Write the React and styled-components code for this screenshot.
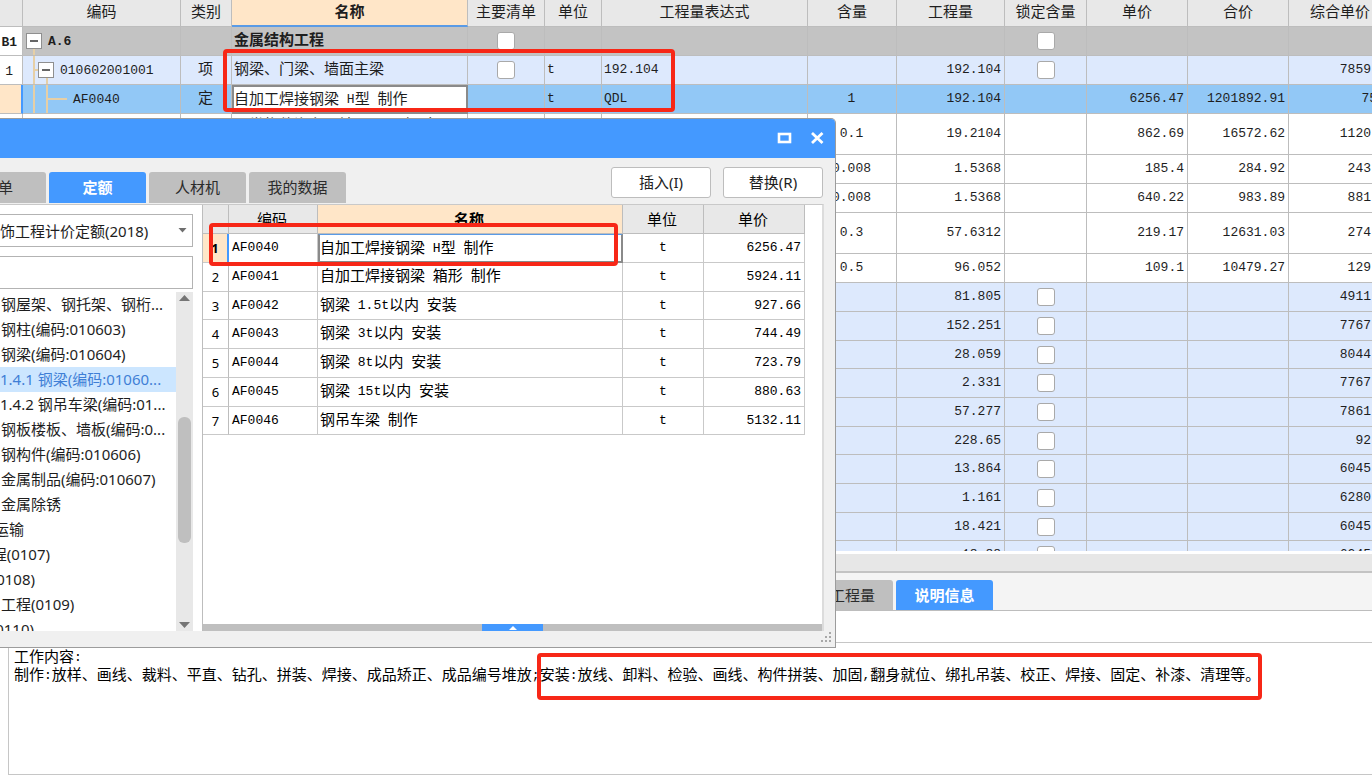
import React from "react";
import styled, { createGlobalStyle, css } from "styled-components";

const GlobalStyle = createGlobalStyle`
  * {
    box-sizing: border-box;
  }
  body {
    margin: 0;
    overflow: hidden;
    background: #ffffff;
  }
`;

const gridFont = `"Liberation Mono", "Noto Sans CJK SC", monospace`;
const cjkFont = `"Noto Sans CJK SC", sans-serif`;
const uiFont = `"Noto Sans", "Noto Sans CJK SC", sans-serif`;

const Page = styled.div`
  position: relative;
  height: 100vh;
  display: flex;
  flex-direction: column;
  overflow: hidden;
  font-family: ${cjkFont};
  font-size: 15px;
  color: #1e1e1e;
`;

const Latin = styled.span`
  font-family: ${gridFont};
  font-size: 13px;
  line-height: 1;
  vertical-align: 1px;
  white-space: pre;
`;

const CheckBox = styled.input`
  appearance: none;
  display: block;
  width: 18px;
  height: 18px;
  margin: 0 auto;
  border: 1px solid #a9a9a9;
  border-radius: 3px;
  background: #ffffff;
`;

/* ---------- bill grid ---------- */

const GridArea = styled.div`
  height: 551px;
  flex: none;
  overflow: hidden;
`;

const Grid = styled.table`
  width: calc(100% + 20px);
  table-layout: fixed;
  border-collapse: separate;
  border-spacing: 0;
`;

const Col = styled.col`
  width: ${(props) => (props.$w ? `${props.$w}px` : "auto")};
`;

const HeadCell = styled.th`
  height: 27px;
  padding: 0 0 4px;
  background: ${(props) => (props.$current ? "#ffe6c8" : "#e8e8e8")};
  border-right: 1px solid #bdbdbd;
  border-bottom: ${(props) =>
    props.$current ? "2px solid #5a9be6" : "1px solid #bdbdbd"};
  font-weight: ${(props) => (props.$current ? 700 : 400)};
  line-height: 20px;
  white-space: nowrap;
`;

const rowTones = {
  group: "#c3c3c3",
  item: "#dde9fd",
  active: "#92c8f6",
  plain: "#ffffff",
};

const Row = styled.tr`
  height: ${(props) => (props.$tall ? 41 : 29)}px;
  background: ${(props) => rowTones[props.$tone]};
  font-weight: ${(props) => (props.$tone === "group" ? 700 : 400)};
  &:nth-child(3),
  &:nth-child(3n + 11) {
    height: 28px;
  }
`;

const Cell = styled.td`
  padding: 0 3px 4px 2px;
  border-right: 1px solid #bdbdbd;
  border-bottom: 1px solid #bdbdbd;
  text-align: ${(props) => props.$align || "left"};
  line-height: 20px;
  white-space: nowrap;
  overflow: hidden;
`;

const CheckCell = styled(Cell)`
  padding: 0;
`;

const LastCell = styled(Cell)`
  padding-right: ${(props) => (props.$cut ? 14 : 20)}px;
`;

const IndexCell = styled(Cell)`
  padding: 0 9px 1px 0;
  background: ${(props) => (props.$current ? "#ffe6c8" : "#ffffff")};
  text-align: right;
  ${(props) =>
    props.$bold &&
    css`
      padding-right: 5px;
    `}
  ${(props) =>
    props.$current &&
    css`
      border-right: 2px solid #4499ff;
    `}
`;

const NameCell = styled(Cell)`
  ${(props) =>
    props.$editing &&
    css`
      background: #ffffff;
      border: 2px solid #8a8a8a;
      padding: 0 0 4px;
    `}
  ${(props) =>
    props.$top &&
    css`
      vertical-align: top;
    `}
`;

const TreeCell = styled(Cell)`
  padding: 0;
`;

const TreeInner = styled.div`
  display: flex;
  align-items: center;
  gap: 6px;
  height: 28px;
`;

const Guides = styled.svg`
  flex: none;
  display: block;
`;

const TreeGuides = ({ level }) => {
  const width = [19, 31, 44][level];
  const boxX = [3, 15][level];
  return (
    <Guides width={width} height="29" viewBox={`0 0 ${width} 29`}>
      <g stroke="#e6cfa6" strokeWidth="2" fill="none">
        {level === 0 && <path d="M11 22V29" />}
        {level === 1 && <path d="M11 0V29M11 14H15M24 22V29" />}
        {level === 2 && <path d="M11 0V29M24 0V29M24 14H44" />}
      </g>
      {boxX && (
        <g>
          <rect
            x={boxX + 0.5}
            y="6.5"
            width="15"
            height="15"
            fill="#fff"
            stroke="#8f8f8f"
          />
          <path
            d={`M${boxX + 4} 14H${boxX + 12}`}
            stroke="#333"
            strokeWidth="1.5"
          />
        </g>
      )}
    </Guides>
  );
};

/* ---------- lower panel ---------- */

const ScrollTrack = styled.div`
  flex: none;
  height: 19px;
  margin-top: 3px;
  background: #e7e7e7;
  border-bottom: 2px solid #c3c3c3;
`;

const DetailTabs = styled.div`
  flex: none;
  display: flex;
  align-items: flex-end;
  gap: 3px;
  height: 38px;
  padding-left: 796px;
  background: #f4f4f4;
  border-bottom: 1px solid #bdbdbd;
`;

const Tab = styled.button`
  flex: none;
  width: 97px;
  height: 31px;
  padding: 0 0 2px;
  border: none;
  border-radius: 3px 3px 0 0;
  background: ${(props) => (props.$active ? "#4499ff" : "#bfbfbf")};
  color: ${(props) => (props.$active ? "#ffffff" : "#2b2b2b")};
  font-family: ${uiFont};
  font-size: 15px;
  font-weight: ${(props) => (props.$active ? 700 : 400)};
  white-space: nowrap;
`;

const DetailTab = styled(Tab)`
  height: 30px;
  padding-right: ${(props) => (props.$active ? 0 : 18)}px;
  text-align: ${(props) => (props.$active ? "center" : "right")};
`;

const DetailBody = styled.div`
  flex: 1;
  display: flex;
  padding: 31px 0 5px 8px;
`;

const DetailText = styled.div`
  flex: 1;
  padding: 4px 5px;
  border: 1px solid #c6c6c6;
  border-right: none;
  color: #000000;
  line-height: 18px;
  white-space: nowrap;
`;

const Line = styled.p`
  margin: 0;
`;

/* ---------- quota dialog ---------- */

const Dialog = styled.section`
  position: absolute;
  top: 118px;
  left: 0;
  width: 836px;
  height: 530px;
  display: flex;
  flex-direction: column;
  background: #f0f0f0;
  border: 1px solid #9c9c9c;
  border-left: none;
  border-radius: 0 5px 0 0;
  overflow: hidden;
`;

const TitleBar = styled.header`
  flex: none;
  display: flex;
  justify-content: flex-end;
  align-items: center;
  gap: 16px;
  height: 39px;
  padding: 0 10px 2px 0;
  background: #4499ff;
`;

const TitleButton = styled.button`
  display: flex;
  padding: 0;
  border: none;
  background: none;
`;

const ToolRow = styled.div`
  flex: none;
  display: flex;
  align-items: flex-end;
  justify-content: space-between;
  height: 46px;
  padding: 0 12px 1px 0;
`;

const TabGroup = styled.div`
  display: flex;
  gap: 3px;
`;

const CutTab = styled(Tab)`
  display: flex;
  align-items: center;
  justify-content: flex-end;
  width: 46px;
  padding-right: 33px;
  border-radius: 0 3px 0 0;
  overflow: hidden;
`;

const Actions = styled.div`
  display: flex;
  gap: 12px;
  padding-bottom: 5px;
`;

const ActionButton = styled.button`
  width: 100px;
  height: 31px;
  padding: 0 0 2px;
  background: #ffffff;
  border: 1px solid #bdbdbd;
  border-radius: 3px;
  color: #1e1e1e;
  font-family: ${uiFont};
  font-size: 15px;
`;

const DialogBody = styled.div`
  flex: 1;
  display: flex;
  min-height: 0;
  margin-right: 11px;
  border-top: 1px solid #c9c9c9;
  border-right: 2px solid #dcdcdc;
  background: #ffffff;
`;

const SidePanel = styled.div`
  flex: none;
  display: flex;
  flex-direction: column;
  width: 202px;
  padding: 9px 9px 0 0;
  font-family: ${uiFont};
`;

const SelectWrap = styled.div`
  position: relative;
  flex: none;
  height: 33px;
  margin-bottom: 9px;
`;

const LibrarySelect = styled.select`
  appearance: none;
  width: 100%;
  height: 33px;
  padding: 0;
  border: 1px solid #b3b3b3;
  border-left: none;
  border-radius: 0;
  background: #ffffff;
  color: #1e1e1e;
  font-family: ${uiFont};
  font-size: 15px;
`;

const SelectArrow = styled.svg`
  position: absolute;
  top: 14px;
  right: 6px;
  pointer-events: none;
`;

const SearchInput = styled.input`
  flex: none;
  width: 100%;
  height: 33px;
  margin-bottom: 3px;
  border: 1px solid #b3b3b3;
  border-left: none;
  font-size: 15px;
`;

const ChapterArea = styled.div`
  flex: 1;
  display: flex;
  min-height: 0;
`;

const ChapterList = styled.ul`
  flex: 1;
  min-width: 0;
  margin: 0;
  padding: 0;
  list-style: none;
  overflow: hidden;
`;

const Chapter = styled.li`
  height: 25px;
  line-height: 25px;
  padding-left: ${(props) => (props.$sub ? 0 : 1)}px;
  background: ${(props) => (props.$active ? "#cce6ff" : "transparent")};
  color: ${(props) => (props.$active ? "#3f7fd6" : "#1e1e1e")};
  white-space: nowrap;
  overflow: hidden;
`;

/* names that start left of the dialog's visible part */
const CutName = styled.span`
  display: flex;
  justify-content: flex-end;
  width: ${(props) => props.$w}px;
`;

const ScrollBar = styled.div`
  flex: none;
  display: flex;
  flex-direction: column;
  align-items: center;
  width: 17px;
  padding: 3px 0;
  background: #e8e8e8;
`;

const Thumb = styled.div`
  width: 13px;
  height: 126px;
  margin: 116px 0 auto;
  border-radius: 6px;
  background: #bfbfbf;
`;

const ResultPanel = styled.div`
  flex: 1;
  display: flex;
  flex-direction: column;
  min-width: 0;
  border-left: 1px solid #bdbdbd;
`;

const ResultTable = styled.table`
  width: 602px;
  table-layout: fixed;
  border-collapse: separate;
  border-spacing: 0;
  color: #000000;
`;

const ResultHead = styled(HeadCell)`
  height: 29px;
  padding: 0 2px 1px 0;
  border-bottom: 1px solid #bdbdbd;
`;

const ResultRow = styled.tr`
  height: 29px;
  &:nth-child(4n + 3) {
    height: 28px;
  }
`;

const ResultCell = styled(Cell)`
  border-color: #c9c9c9;
  padding-left: 3px;
`;

const ResultIndex = styled(ResultCell)`
  padding: 0;
  background: ${(props) => (props.$current ? "#ffe6c8" : "#ffffff")};
  border-right: ${(props) =>
    props.$current ? "2px solid #4499ff" : "1px solid #bdbdbd"};
  font-family: ${uiFont};
  font-size: 13px;
  font-weight: ${(props) => (props.$current ? 700 : 400)};
  text-align: center;
`;

const ResultName = styled(ResultCell)`
  padding-left: 2px;
  ${(props) =>
    props.$editing &&
    css`
      border: 2px solid #8a8a8a;
      border-top: 1px solid #5a9be6;
      padding: 0 0 3px;
    `}
`;

const Splitter = styled.div`
  flex: none;
  display: flex;
  justify-content: center;
  height: 7px;
  margin-top: auto;
  background: #bfbfbf;
`;

const SplitterHandle = styled.button`
  display: flex;
  align-items: center;
  justify-content: center;
  width: 61px;
  height: 7px;
  padding: 0;
  border: none;
  background: #4499ff;
`;

const DialogFooter = styled.footer`
  flex: none;
  display: flex;
  justify-content: flex-end;
  height: 16px;
  padding: 1px 3px 0 0;
`;

/* ---------- highlight frames ---------- */

const Mark = styled.div`
  position: absolute;
  top: ${(props) => props.$top}px;
  left: ${(props) => props.$left}px;
  width: ${(props) => props.$w}px;
  height: ${(props) => props.$h}px;
  border: 4px solid #f72717;
  border-radius: 4px;
  pointer-events: none;
`;

// The grid sets western letters and digits smaller than the Chinese text
const Text = ({ children }) =>
  String(children)
    .split(/([\x20-\x7e]+)/)
    .filter(Boolean)
    .map((part, i) =>
      /^[\x20-\x7e]/.test(part) ? (
        <Latin key={i}>{part}</Latin>
      ) : (
        <React.Fragment key={i}>{part}</React.Fragment>
      )
    );

const columns = [
  { title: "", w: 23 },
  { title: "编码", w: 158 },
  { title: "类别", w: 51 },
  { title: "名称", w: 236, current: true },
  { title: "主要清单", w: 77 },
  { title: "单位", w: 57 },
  { title: "工程量表达式" },
  { title: "含量", w: 89 },
  { title: "工程量", w: 108 },
  { title: "锁定含量", w: 82 },
  { title: "单价", w: 101 },
  { title: "合价", w: 101 },
  { title: "综合单价", w: 103 },
];

const rows = [
  { no: "B1", tone: "group", level: 0, code: "A.6", name: "金属结构工程", main: true, lock: true },
  { no: "1", tone: "item", level: 1, code: "010602001001", kind: "项", name: "钢梁、门梁、墙面主梁", main: true, unit: "t", expr: "192.104", qty: "192.104", lock: true, full: "7859" },
  { no: "", tone: "active", level: 2, code: "AF0040", kind: "定", name: "自加工焊接钢梁 H型 制作", unit: "t", expr: "QDL", rate: "1", qty: "192.104", price: "6256.47", total: "1201892.91", full: "75", cut: true },
  { tone: "plain", tall: true, level: 2, name: "Ⅱ类构件汽车运输 1km以内 实际", rate: "0.1", qty: "19.2104", price: "862.69", total: "16572.62", full: "1120" },
  { tone: "plain", rate: "0.008", qty: "1.5368", price: "185.4", total: "284.92", full: "243" },
  { tone: "plain", rate: "0.008", qty: "1.5368", price: "640.22", total: "983.89", full: "881" },
  { tone: "plain", tall: true, rate: "0.3", qty: "57.6312", price: "219.17", total: "12631.03", full: "274" },
  { tone: "plain", rate: "0.5", qty: "96.052", price: "109.1", total: "10479.27", full: "129" },
  { tone: "item", qty: "81.805", lock: true, full: "4911" },
  { tone: "item", qty: "152.251", lock: true, full: "7767" },
  { tone: "item", qty: "28.059", lock: true, full: "8044" },
  { tone: "item", qty: "2.331", lock: true, full: "7767" },
  { tone: "item", qty: "57.277", lock: true, full: "7861" },
  { tone: "item", qty: "228.65", lock: true, full: "92" },
  { tone: "item", qty: "13.864", lock: true, full: "6045" },
  { tone: "item", qty: "1.161", lock: true, full: "6280" },
  { tone: "item", qty: "18.421", lock: true, full: "6045" },
  { tone: "item", qty: "18.88", lock: true, full: "6245" },
];

const chapters = [
  { name: "钢屋架、钢托架、钢桁..." },
  { name: "钢柱(编码:010603)" },
  { name: "钢梁(编码:010604)" },
  { name: "1.4.1 钢梁(编码:01060...", sub: true, active: true },
  { name: "1.4.2 钢吊车梁(编码:01...", sub: true },
  { name: "钢板楼板、墙板(编码:0..." },
  { name: "钢构件(编码:010606)" },
  { name: "金属制品(编码:010607)" },
  { name: "金属除锈" },
  { name: "运输", cut: 23 },
  { name: "程(0107)", cut: 49 },
  { name: "(0108)", cut: 34 },
  { name: "工程(0109)" },
  { name: "(0110)", cut: 33 },
];

const quotas = [
  { code: "AF0040", name: "自加工焊接钢梁 H型 制作", price: "6256.47" },
  { code: "AF0041", name: "自加工焊接钢梁 箱形 制作", price: "5924.11" },
  { code: "AF0042", name: "钢梁 1.5t以内 安装", price: "927.66" },
  { code: "AF0043", name: "钢梁 3t以内 安装", price: "744.49" },
  { code: "AF0044", name: "钢梁 8t以内 安装", price: "723.79" },
  { code: "AF0045", name: "钢梁 15t以内 安装", price: "880.63" },
  { code: "AF0046", name: "钢吊车梁 制作", price: "5132.11" },
];

const BillGrid = () => (
  <GridArea>
    <Grid>
      <colgroup>
        {columns.map((col, i) => (
          <Col key={i} $w={col.w} />
        ))}
      </colgroup>
      <thead>
        <tr>
          {columns.map((col, i) => (
            <HeadCell key={i} $current={col.current}>
              {col.title}
            </HeadCell>
          ))}
        </tr>
      </thead>
      <tbody>
        {rows.map((row, i) => (
          <Row key={i} $tone={row.tone} $tall={row.tall}>
            <IndexCell $current={row.no === ""} $bold={row.tone === "group"}>
              <Text>{row.no || ""}</Text>
            </IndexCell>
            <TreeCell>
              {row.level !== undefined && (
                <TreeInner>
                  <TreeGuides level={row.level} />
                  <Text>{row.code || ""}</Text>
                </TreeInner>
              )}
            </TreeCell>
            <Cell $align="center">{row.kind}</Cell>
            <NameCell $editing={row.tone === "active"} $top={row.tall}>
              <Text>{row.name || ""}</Text>
            </NameCell>
            <CheckCell>
              {row.main && <CheckBox type="checkbox" aria-label="主要清单" />}
            </CheckCell>
            <Cell>
              <Text>{row.unit || ""}</Text>
            </Cell>
            <Cell>
              <Text>{row.expr || ""}</Text>
            </Cell>
            <Cell $align="center">
              <Text>{row.rate || ""}</Text>
            </Cell>
            <Cell $align="right">
              <Text>{row.qty || ""}</Text>
            </Cell>
            <CheckCell>
              {row.lock && <CheckBox type="checkbox" aria-label="锁定含量" />}
            </CheckCell>
            <Cell $align="right">
              <Text>{row.price || ""}</Text>
            </Cell>
            <Cell $align="right">
              <Text>{row.total || ""}</Text>
            </Cell>
            <LastCell $align="right" $cut={row.cut}>
              <Text>{row.full || ""}</Text>
            </LastCell>
          </Row>
        ))}
      </tbody>
    </Grid>
  </GridArea>
);

const QuotaDialog = () => (
  <Dialog>
    <TitleBar>
      <TitleButton aria-label="最大化">
        <svg width="18" height="18" viewBox="0 0 18 18">
          <rect
            x="4"
            y="5"
            width="11"
            height="8"
            fill="none"
            stroke="#fff"
            strokeWidth="2.6"
          />
        </svg>
      </TitleButton>
      <TitleButton aria-label="关闭">
        <svg width="16" height="18" viewBox="0 0 16 18">
          <path d="M3 4L13.5 14M13.5 4L3 14" stroke="#fff" strokeWidth="2.8" />
        </svg>
      </TitleButton>
    </TitleBar>
    <ToolRow>
      <TabGroup>
        <CutTab>清单</CutTab>
        <Tab $active>定额</Tab>
        <Tab>人材机</Tab>
        <Tab>我的数据</Tab>
      </TabGroup>
      <Actions>
        <ActionButton>插入(I)</ActionButton>
        <ActionButton>替换(R)</ActionButton>
      </Actions>
    </ToolRow>
    <DialogBody>
      <SidePanel>
        <SelectWrap>
          <LibrarySelect aria-label="定额库">
            <option>饰工程计价定额(2018)</option>
          </LibrarySelect>
          <SelectArrow width="9" height="5" viewBox="0 0 9 5">
            <path d="M0.5 0H8.5L4.5 4.5Z" fill="#6e6e6e" />
          </SelectArrow>
        </SelectWrap>
        <SearchInput type="text" aria-label="搜索" />
        <ChapterArea>
          <ChapterList>
            {chapters.map((item) => (
              <Chapter key={item.name} $sub={item.sub} $active={item.active}>
                {item.cut ? (
                  <CutName $w={item.cut}>{item.name}</CutName>
                ) : (
                  item.name
                )}
              </Chapter>
            ))}
          </ChapterList>
          <ScrollBar>
            <svg width="11" height="6" viewBox="0 0 11 6">
              <path d="M0 6H11L5.5 0Z" fill="#757575" />
            </svg>
            <Thumb />
            <svg width="11" height="6" viewBox="0 0 11 6">
              <path d="M0 0H11L5.5 6Z" fill="#757575" />
            </svg>
          </ScrollBar>
        </ChapterArea>
      </SidePanel>
      <ResultPanel>
        <ResultTable>
          <colgroup>
            <Col $w={26} />
            <Col $w={89} />
            <Col $w={305} />
            <Col $w={81} />
            <Col $w={101} />
          </colgroup>
          <thead>
            <tr>
              <ResultHead />
              <ResultHead>编码</ResultHead>
              <ResultHead $current>名称</ResultHead>
              <ResultHead>单位</ResultHead>
              <ResultHead>单价</ResultHead>
            </tr>
          </thead>
          <tbody>
            {quotas.map((quota, i) => (
              <ResultRow key={quota.code}>
                <ResultIndex $current={i === 0}>{i + 1}</ResultIndex>
                <ResultCell>
                  <Text>{quota.code}</Text>
                </ResultCell>
                <ResultName $editing={i === 0}>
                  <Text>{quota.name}</Text>
                </ResultName>
                <ResultCell $align="center">
                  <Text>t</Text>
                </ResultCell>
                <ResultCell $align="right">
                  <Text>{quota.price}</Text>
                </ResultCell>
              </ResultRow>
            ))}
          </tbody>
        </ResultTable>
        <Splitter>
          <SplitterHandle aria-label="展开">
            <svg width="8" height="4" viewBox="0 0 8 4">
              <path d="M0 4H8L4 0Z" fill="#fff" />
            </svg>
          </SplitterHandle>
        </Splitter>
      </ResultPanel>
    </DialogBody>
    <DialogFooter>
      <svg width="11" height="11" viewBox="0 0 11 11" fill="#a8a8a8">
        <path d="M8 0h2v2h-2zM4 4h2v2h-2zM8 4h2v2h-2zM0 8h2v2h-2zM4 8h2v2h-2zM8 8h2v2h-2z" />
      </svg>
    </DialogFooter>
  </Dialog>
);

const App = () => {
  return (
    <Page>
      <GlobalStyle />
      <BillGrid />
      <ScrollTrack />
      <DetailTabs>
        <DetailTab>工程量</DetailTab>
        <DetailTab $active>说明信息</DetailTab>
      </DetailTabs>
      <DetailBody>
        <DetailText>
          <Line>
            <Text>工作内容:</Text>
          </Line>
          <Line>
            <Text>
              制作:放样、画线、裁料、平直、钻孔、拼装、焊接、成品矫正、成品编号堆放;安装:放线、卸料、检验、画线、构件拼装、加固,翻身就位、绑扎吊装、校正、焊接、固定、补漆、清理等。
            </Text>
          </Line>
        </DetailText>
      </DetailBody>
      <QuotaDialog />
      <Mark $top={49} $left={223} $w={452} $h={63} />
      <Mark $top={223} $left={209} $w={409} $h={43} />
      <Mark $top={653} $left={537} $w={725} $h={47} />
    </Page>
  );
};

export default App;
